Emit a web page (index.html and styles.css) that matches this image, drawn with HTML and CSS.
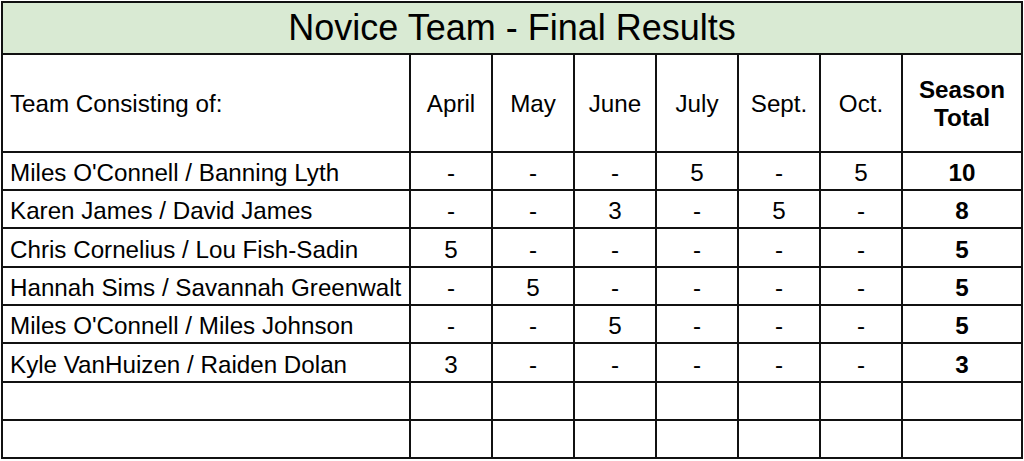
FILE: index.html
```html
<!DOCTYPE html>
<html>
<head>
<meta charset="utf-8">
<link rel="stylesheet" href="styles.css">
</head>
<body>
<div class="sheet">
  <div class="title">Novice Team - Final Results</div>

  <div class="cell head name">Team Consisting of:</div>
  <div class="cell head">April</div>
  <div class="cell head">May</div>
  <div class="cell head">June</div>
  <div class="cell head">July</div>
  <div class="cell head">Sept.</div>
  <div class="cell head">Oct.</div>
  <div class="cell head total">Season<br>Total</div>

  <div class="cell name">Miles O'Connell / Banning Lyth</div>
  <div class="cell">-</div><div class="cell">-</div><div class="cell">-</div><div class="cell">5</div><div class="cell">-</div><div class="cell">5</div>
  <div class="cell total">10</div>

  <div class="cell name">Karen James / David James</div>
  <div class="cell">-</div><div class="cell">-</div><div class="cell">3</div><div class="cell">-</div><div class="cell">5</div><div class="cell">-</div>
  <div class="cell total">8</div>

  <div class="cell name">Chris Cornelius / Lou Fish-Sadin</div>
  <div class="cell">5</div><div class="cell">-</div><div class="cell">-</div><div class="cell">-</div><div class="cell">-</div><div class="cell">-</div>
  <div class="cell total">5</div>

  <div class="cell name">Hannah Sims / Savannah Greenwalt</div>
  <div class="cell">-</div><div class="cell">5</div><div class="cell">-</div><div class="cell">-</div><div class="cell">-</div><div class="cell">-</div>
  <div class="cell total">5</div>

  <div class="cell name">Miles O'Connell / Miles Johnson</div>
  <div class="cell">-</div><div class="cell">-</div><div class="cell">5</div><div class="cell">-</div><div class="cell">-</div><div class="cell">-</div>
  <div class="cell total">5</div>

  <div class="cell name">Kyle VanHuizen / Raiden Dolan</div>
  <div class="cell">3</div><div class="cell">-</div><div class="cell">-</div><div class="cell">-</div><div class="cell">-</div><div class="cell">-</div>
  <div class="cell total">3</div>

  <div class="cell name"></div>
  <div class="cell"></div><div class="cell"></div><div class="cell"></div><div class="cell"></div><div class="cell"></div><div class="cell"></div>
  <div class="cell total"></div>

  <div class="cell name"></div>
  <div class="cell"></div><div class="cell"></div><div class="cell"></div><div class="cell"></div><div class="cell"></div><div class="cell"></div>
  <div class="cell total"></div>
</div>
</body>
</html>
```

FILE: styles.css
```css
html, body {
  margin: 0;
  padding: 0;
  background: #ffffff;
}

body {
  font-family: "Liberation Sans", Arial, sans-serif;
  color: #000000;
}

.sheet {
  display: grid;
  grid-template-columns: 406px repeat(6, 80px) 118px;
  grid-template-rows: 50px 96px 36px 36px 37px 36px 36px 37px 36px 36px;
  gap: 2px;
  padding: 2px;
  background: #111111;
  width: max-content;
  margin: 1px 0 0 1px;
}

.title {
  grid-column: 1 / -1;
  background: #d9ead3;
  display: flex;
  align-items: center;
  justify-content: center;
  font-size: 36px;
  line-height: 40px;
}

.cell {
  background: #ffffff;
  display: flex;
  align-items: flex-end;
  justify-content: center;
  font-size: 24.2px;
  line-height: 26px;
  padding-bottom: 3px;
  box-sizing: border-box;
  white-space: nowrap;
}

.cell.name {
  justify-content: flex-start;
  padding-left: 7px;
}

.cell.total {
  font-weight: bold;
}

.cell.head {
  align-items: center;
  padding-top: 2px;
  padding-bottom: 0;
  text-align: center;
}

.cell.head.total {
  line-height: 28px;
}
```
